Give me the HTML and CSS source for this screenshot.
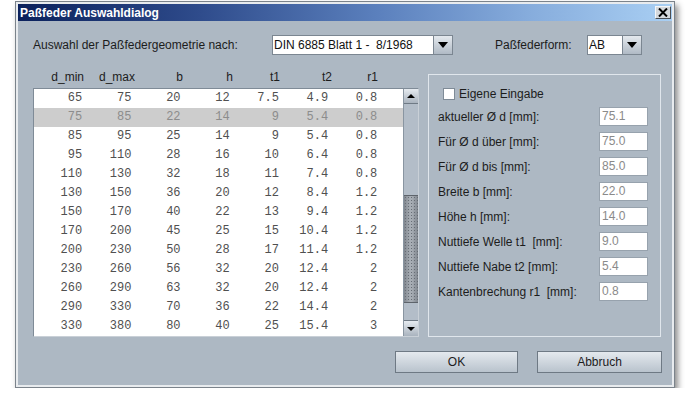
FILE: index.html
```html
<!DOCTYPE html>
<html lang="de">
<head>
<meta charset="utf-8">
<title>Paßfeder Auswahldialog</title>
<link rel="stylesheet" href="styles.css">
</head>
<body>
<div class="window">
  <div class="titlebar">
    <span class="title">Paßfeder Auswahldialog</span>
    <span class="close"><svg width="10" height="9" viewBox="0 0 10 9"><path d="M1 0.5 L9 8.5 M9 0.5 L1 8.5" stroke="#000" stroke-width="2"/></svg></span>
  </div>
  <div class="content">
    <div class="toprow">
      <span class="lbl1">Auswahl der Paßfedergeometrie nach:</span>
      <div class="combo combo-din"><span class="combo-text">DIN 6885 Blatt 1 -  8/1968</span><span class="combo-btn"><i class="tri-down"></i></span></div>
      <span class="lbl2">Paßfederform:</span>
      <div class="combo combo-ab"><span class="combo-text">AB</span><span class="combo-btn"><i class="tri-down"></i></span></div>
    </div>
    <div class="main">
      <div class="left">
        <div class="thead">
          <span>d_min</span><span>d_max</span><span>b</span><span>h</span><span>t1</span><span>t2</span><span>r1</span>
        </div>
        <div class="table">
          <div class="rows">
            <div class="row"><span>65</span><span>75</span><span>20</span><span>12</span><span>7.5</span><span>4.9</span><span>0.8</span></div>
            <div class="row sel"><span>75</span><span>85</span><span>22</span><span>14</span><span>9</span><span>5.4</span><span>0.8</span></div>
            <div class="row"><span>85</span><span>95</span><span>25</span><span>14</span><span>9</span><span>5.4</span><span>0.8</span></div>
            <div class="row"><span>95</span><span>110</span><span>28</span><span>16</span><span>10</span><span>6.4</span><span>0.8</span></div>
            <div class="row"><span>110</span><span>130</span><span>32</span><span>18</span><span>11</span><span>7.4</span><span>0.8</span></div>
            <div class="row"><span>130</span><span>150</span><span>36</span><span>20</span><span>12</span><span>8.4</span><span>1.2</span></div>
            <div class="row"><span>150</span><span>170</span><span>40</span><span>22</span><span>13</span><span>9.4</span><span>1.2</span></div>
            <div class="row"><span>170</span><span>200</span><span>45</span><span>25</span><span>15</span><span>10.4</span><span>1.2</span></div>
            <div class="row"><span>200</span><span>230</span><span>50</span><span>28</span><span>17</span><span>11.4</span><span>1.2</span></div>
            <div class="row"><span>230</span><span>260</span><span>56</span><span>32</span><span>20</span><span>12.4</span><span>2</span></div>
            <div class="row"><span>260</span><span>290</span><span>63</span><span>32</span><span>20</span><span>12.4</span><span>2</span></div>
            <div class="row"><span>290</span><span>330</span><span>70</span><span>36</span><span>22</span><span>14.4</span><span>2</span></div>
            <div class="row"><span>330</span><span>380</span><span>80</span><span>40</span><span>25</span><span>15.4</span><span>3</span></div>
          </div>
          <div class="sb">
            <div class="sb-btn sb-up"><i class="tri-up"></i></div>
            <div class="sb-track"><div class="sb-thumb"></div></div>
            <div class="sb-btn sb-down"><i class="tri-down small"></i></div>
          </div>
        </div>
      </div>
      <div class="group">
        <div class="check"><span class="box"></span><span>Eigene Eingabe</span></div>
        <div class="frow"><span class="flabel">aktueller Ø d [mm]:</span><span class="field">75.1</span></div>
        <div class="frow"><span class="flabel">Für Ø d über [mm]:</span><span class="field">75.0</span></div>
        <div class="frow"><span class="flabel">Für Ø d bis [mm]:</span><span class="field">85.0</span></div>
        <div class="frow"><span class="flabel">Breite b [mm]:</span><span class="field">22.0</span></div>
        <div class="frow"><span class="flabel">Höhe h [mm]:</span><span class="field">14.0</span></div>
        <div class="frow"><span class="flabel">Nuttiefe Welle t1 &nbsp;[mm]:</span><span class="field">9.0</span></div>
        <div class="frow"><span class="flabel">Nuttiefe Nabe t2 [mm]:</span><span class="field">5.4</span></div>
        <div class="frow"><span class="flabel">Kantenbrechung r1 &nbsp;[mm]:</span><span class="field">0.8</span></div>
      </div>
    </div>
    <div class="buttons">
      <div class="btn btn-ok">OK</div>
      <div class="btn btn-cancel">Abbruch</div>
    </div>
  </div>
</div>
</body>
</html>
```

FILE: styles.css
```css
* { box-sizing: border-box; }

body {
  margin: 0;
  background: #ffffff;
  font-family: "Liberation Sans", Arial, sans-serif;
  font-size: 12px;
  color: #1c1c1c;
}

.window {
  margin: 1px 0 0 15px;
  width: 660px;
  height: 387px;
  border: 1px solid #7b838b;
  background: #e8ebee;
  padding: 2px;
  box-shadow: 3px 4px 6px rgba(0, 0, 0, 0.45);
  display: flex;
  flex-direction: column;
}

.titlebar {
  height: 17px;
  flex: none;
  background: linear-gradient(90deg, #0b215c 0%, #2f4c8c 28%, #5b80bd 55%, #86acdc 78%, #a9cff3 100%);
  display: flex;
  align-items: center;
  justify-content: space-between;
  padding: 0 1px 0 2px;
}

.title {
  color: #ffffff;
  font-weight: bold;
  font-size: 12px;
}

.close {
  width: 16px;
  height: 13px;
  background: #d4d8dc;
  border: 1px solid;
  border-color: #f4f6f8 #4a4f55 #4a4f55 #f4f6f8;
  display: flex;
  align-items: center;
  justify-content: center;
}

.content {
  flex: 1;
  background: #adb8c3;
  padding: 14px 0 0 15px;
}

.toprow {
  display: flex;
  align-items: center;
  height: 20px;
}

.lbl1 { width: 239px; }
.lbl2 { width: 92px; margin-left: 42px; }

.combo {
  display: flex;
  height: 20px;
  border: 1px solid #7b8691;
  background: #ffffff;
}
.combo-din { width: 181px; }
.combo-ab { width: 55px; }

.combo-text {
  flex: 1;
  padding-left: 1px;
  line-height: 18px;
  white-space: pre;
  color: #111;
}

.combo-btn {
  width: 19px;
  border-left: 1px solid #7b8691;
  background: linear-gradient(#e4e9ee, #b0bac5);
  display: flex;
  align-items: center;
  justify-content: center;
}

.tri-down {
  display: block;
  width: 0;
  height: 0;
  border-left: 5px solid transparent;
  border-right: 5px solid transparent;
  border-top: 6px solid #000;
}
.tri-down.small {
  border-left-width: 4px;
  border-right-width: 4px;
  border-top-width: 4px;
}
.tri-up {
  display: block;
  width: 0;
  height: 0;
  border-left: 4px solid transparent;
  border-right: 4px solid transparent;
  border-bottom: 4px solid #000;
}

.main {
  display: grid;
  grid-template-columns: 386px 233px;
  column-gap: 9px;
  margin-top: 11px;
}

.thead {
  display: grid;
  grid-template-columns: 50px 51px 48px 50px 47px 52px 46px;
  height: 22px;
  align-items: center;
  padding-left: 1px;
  color: #1c1c1c;
}
.thead span { text-align: right; }

.table {
  height: 249px;
  border: 1px solid #7f8b97;
  border-right-color: #c9d0d7;
  border-bottom-color: #c9d0d7;
  background: #ffffff;
  display: flex;
}

.rows { flex: 1; }

.row {
  display: grid;
  grid-template-columns: repeat(7, 49.2px) 1fr;
  height: 19px;
  line-height: 19px;
  font-family: "Liberation Mono", "Courier New", monospace;
  font-size: 12px;
  color: #505050;
}
.row span { text-align: right; padding-right: 1px; }
.row.sel { background: #cdcdcd; color: #8c8c8c; }

.sb {
  width: 15px;
  display: flex;
  flex-direction: column;
  border-left: 1px solid #8995a1;
  background: #b3bdc8;
}

.sb-btn {
  height: 15px;
  flex: none;
  background: linear-gradient(#e6ebf0, #a9b3be);
  border-bottom: 1px solid #6f7a85;
  display: flex;
  align-items: center;
  justify-content: center;
}
.sb-down {
  height: 16px;
  border-bottom: none;
  border-top: 1px solid #6f7a85;
}

.sb-track {
  flex: 1;
  padding-top: 91px;
}

.sb-thumb {
  height: 108px;
  border-top: 1px solid #5e646b;
  border-bottom: 1px solid #5e646b;
  background-color: #9da3ab;
  background-image:
    radial-gradient(circle, #676d75 0.7px, transparent 1px),
    linear-gradient(90deg, #80868e, #a8aeb5 45%, #a8aeb5 55%, #80868e);
  background-size: 3px 3px, 100% 100%;
}

.group {
  margin-top: 8px;
  height: 263px;
  border: 1px solid #e0e6ec;
  padding: 11px 0 0 9px;
}

.check {
  display: flex;
  align-items: center;
  height: 16px;
  margin-bottom: 5px;
  padding-left: 5px;
}

.box {
  width: 12px;
  height: 12px;
  background: #ffffff;
  border: 1px solid #7f8b97;
  margin-right: 4px;
}

.frow {
  display: flex;
  align-items: center;
  height: 19px;
  margin-bottom: 6px;
}

.flabel { width: 161px; white-space: nowrap; }

.field {
  width: 49px;
  height: 19px;
  background: #ffffff;
  border: 1px solid #97a2ad;
  color: #8a8a8a;
  padding-left: 2px;
  line-height: 17px;
}

.buttons {
  display: flex;
  gap: 19px;
  margin-top: 14px;
  padding-left: 362px;
}

.btn {
  height: 22px;
  border: 1px solid #6e7984;
  background: linear-gradient(#e4e9ee, #b9c3cd);
  display: flex;
  align-items: center;
  justify-content: center;
  color: #1c1c1c;
}
.btn-ok { width: 123px; }
.btn-cancel { width: 125px; }
```
